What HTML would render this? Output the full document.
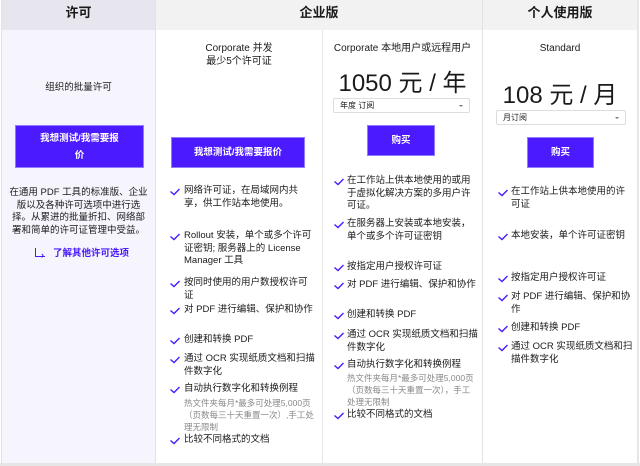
<!DOCTYPE html>
<html><head><meta charset="utf-8"><style>
*{margin:0;padding:0;box-sizing:border-box}
body{width:640px;height:466px;background:#fff;font-family:"Liberation Sans","Noto Sans CJK SC",sans-serif;color:#1a1a1a;position:relative;overflow:hidden;font-size:9.5px}
.a{position:absolute}
.h{top:0;height:30px;font-size:13px;font-weight:bold;text-align:center;line-height:26px}
.btn{position:absolute;background:#4b1aff;border:1px solid #8f7bff;color:#fff;font-weight:bold;font-size:9.5px;display:flex;align-items:center;justify-content:center;text-align:center;line-height:17px}
.t{position:absolute;line-height:12.5px;font-size:9.5px;white-space:nowrap}
.c{position:absolute;width:12px;height:10px}
.g{color:#888;font-size:8.5px;line-height:12px}
.price{position:absolute;font-size:24px;text-align:center}
.sel{position:absolute;border:1px solid #ddd;border-radius:2px;height:15px;font-size:8px;line-height:13px;padding-left:6px;background:#fff}
.sel:after{content:"";position:absolute;right:6px;top:6px;border:2px solid transparent;border-top:2px solid #777}
</style></head><body>
<div class="a" style="left:2px;top:30px;width:153px;height:434px;background:#f6f5fd"></div>
<div class="a h" style="left:2px;width:153px;background:#e7e6ee">许可</div>
<div class="a h" style="left:156px;width:326px;background:#f2f2f2">企业版</div>
<div class="a h" style="left:483px;width:154px;background:#f2f2f2">个人使用版</div>
<div class="a" style="left:155px;top:0;width:1px;height:464px;background:#e2e2e2"></div>
<div class="a" style="left:322px;top:30px;width:1px;height:434px;background:#e8e8e8"></div>
<div class="a" style="left:482px;top:0;width:1px;height:464px;background:#e2e2e2"></div>
<div class="a" style="left:1px;top:0;width:1px;height:464px;background:#e2e2e2"></div>
<div class="a" style="left:637px;top:0;width:2px;height:464px;background:#e6e6e6"></div>
<div class="a" style="left:0;top:463px;width:640px;height:3px;background:#e6e6e6"></div>

<!-- col1 -->
<div class="t" style="left:2px;width:153px;top:82px;text-align:center">组织的批量许可</div>
<div class="btn" style="left:15px;top:125px;width:129px;height:43px">我想测试/我需要报<br>价</div>
<div class="t" style="left:2px;width:153px;top:187px;text-align:center">在通用 PDF 工具的标准版、企业<br>版以及各种许可选项中进行选<br>择。从累进的批量折扣、网络部<br>署和简单的许可证管理中受益。</div>
<div class="a" style="left:35px;top:248px;width:10px;height:9px;border-left:1.5px solid #4b1aff;border-bottom:1.5px solid #4b1aff"></div>
<div class="a" style="left:41px;top:250px;color:#4b1aff;font-size:9px;font-weight:bold">›</div>
<div class="t" style="left:53px;top:248px;color:#4b1aff;font-weight:bold">了解其他许可选项</div>

<!-- col2 -->
<div class="t" style="left:156px;width:166px;top:43px;text-align:center;font-size:10px">Corporate 并发<br>最少5个许可证</div>
<div class="btn" style="left:171px;top:137px;width:134px;height:31px">我想测试/我需要报价</div>

<!-- col3 -->
<div class="t" style="left:323px;width:159px;top:43px;text-align:center;font-size:10px">Corporate 本地用户或远程用户</div>
<div class="price" style="left:323px;width:159px;top:63px">1050 元 / 年</div>
<div class="sel" style="left:333px;top:98px;width:137px">年度 订阅</div>
<div class="btn" style="left:367px;top:125px;width:68px;height:31px">购买</div>

<!-- col4 -->
<div class="t" style="left:483px;width:154px;top:43px;text-align:center;font-size:10px">Standard</div>
<div class="price" style="left:483px;width:154px;top:75px">108 元 / 月</div>
<div class="sel" style="left:496px;top:110px;width:130px">月订阅</div>
<div class="btn" style="left:527px;top:137px;width:67px;height:31px">购买</div>

<svg width="0" height="0" style="position:absolute"><defs><symbol id="k" viewBox="0 0 12 10"><path d="M1.5 4.5 L5 7.5 L10.5 2" fill="none" stroke="#4b1aff" stroke-width="1.4"/></symbol></defs></svg>

<!-- col2 items -->
<div class="t" style="left:184px;top:185px">网络许可证，在局域网内共<br>享，供工作站本地使用。</div>
<div class="t" style="left:184px;top:230px">Rollout 安装，单个或多个许可<br>证密钥; 服务器上的 License<br>Manager 工具</div>
<div class="t" style="left:184px;top:277px">按同时使用的用户数授权许可<br>证</div>
<div class="t" style="left:184px;top:304px">对 PDF 进行编辑、保护和协作</div>
<div class="t" style="left:184px;top:334px">创建和转换 PDF</div>
<div class="t" style="left:184px;top:353px">通过 OCR 实现纸质文档和扫描<br>件数字化</div>
<div class="t" style="left:184px;top:383px">自动执行数字化和转换例程</div>
<div class="t g" style="left:184px;top:397px">热文件夹每月*最多可处理5,000页<br>（页数每三十天重置一次）,手工处<br>理无限制</div>
<div class="t" style="left:184px;top:434px">比较不同格式的文档</div>
<svg class="c" style="left:169px;top:187px"><use href="#k"/></svg>
<svg class="c" style="left:169px;top:232px"><use href="#k"/></svg>
<svg class="c" style="left:169px;top:279px"><use href="#k"/></svg>
<svg class="c" style="left:169px;top:306px"><use href="#k"/></svg>
<svg class="c" style="left:169px;top:336px"><use href="#k"/></svg>
<svg class="c" style="left:169px;top:355px"><use href="#k"/></svg>
<svg class="c" style="left:169px;top:385px"><use href="#k"/></svg>
<svg class="c" style="left:169px;top:436px"><use href="#k"/></svg>

<!-- col3 items -->
<div class="t" style="left:347px;top:175px">在工作站上供本地使用的或用<br>于虚拟化解决方案的多用户许<br>可证。</div>
<div class="t" style="left:347px;top:218px">在服务器上安装或本地安装，<br>单个或多个许可证密钥</div>
<div class="t" style="left:347px;top:261px">按指定用户授权许可证</div>
<div class="t" style="left:347px;top:279px">对 PDF 进行编辑、保护和协作</div>
<div class="t" style="left:347px;top:309px">创建和转换 PDF</div>
<div class="t" style="left:347px;top:329px">通过 OCR 实现纸质文档和扫描<br>件数字化</div>
<div class="t" style="left:347px;top:359px">自动执行数字化和转换例程</div>
<div class="t g" style="left:347px;top:372px">热文件夹每月*最多可处理5,000页<br>（页数每三十天重置一次），手工<br>处理无限制</div>
<div class="t" style="left:347px;top:409px">比较不同格式的文档</div>
<svg class="c" style="left:333px;top:177px"><use href="#k"/></svg>
<svg class="c" style="left:333px;top:220px"><use href="#k"/></svg>
<svg class="c" style="left:333px;top:263px"><use href="#k"/></svg>
<svg class="c" style="left:333px;top:281px"><use href="#k"/></svg>
<svg class="c" style="left:333px;top:311px"><use href="#k"/></svg>
<svg class="c" style="left:333px;top:331px"><use href="#k"/></svg>
<svg class="c" style="left:333px;top:361px"><use href="#k"/></svg>
<svg class="c" style="left:333px;top:411px"><use href="#k"/></svg>

<!-- col4 items -->
<div class="t" style="left:511px;top:186px">在工作站上供本地使用的许<br>可证</div>
<div class="t" style="left:511px;top:230px">本地安装，单个许可证密钥</div>
<div class="t" style="left:511px;top:272px">按指定用户授权许可证</div>
<div class="t" style="left:511px;top:291px">对 PDF 进行编辑、保护和协<br>作</div>
<div class="t" style="left:511px;top:322px">创建和转换 PDF</div>
<div class="t" style="left:511px;top:341px">通过 OCR 实现纸质文档和扫<br>描件数字化</div>
<svg class="c" style="left:497px;top:188px"><use href="#k"/></svg>
<svg class="c" style="left:497px;top:232px"><use href="#k"/></svg>
<svg class="c" style="left:497px;top:274px"><use href="#k"/></svg>
<svg class="c" style="left:497px;top:293px"><use href="#k"/></svg>
<svg class="c" style="left:497px;top:324px"><use href="#k"/></svg>
<svg class="c" style="left:497px;top:343px"><use href="#k"/></svg>
</body></html>
